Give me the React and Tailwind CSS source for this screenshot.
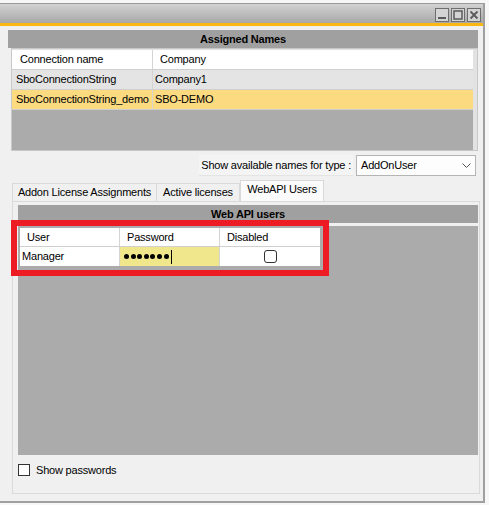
import React from 'react';

const font = { fontFamily: "'Liberation Sans', Arial, sans-serif" };

function TitleButton({ kind }) {
  return (
    <div className="w-[14px] h-[14px] border border-[#6e6e6e] bg-[#d4d4d4] flex items-center justify-center">
      <svg width="10" height="10" viewBox="0 0 10 10">
        {kind === 'min' && <rect x="1" y="7" width="8" height="2" fill="#5a5a5a" />}
        {kind === 'max' && <rect x="1" y="1" width="8" height="8" fill="none" stroke="#5a5a5a" strokeWidth="1.5" />}
        {kind === 'close' && (
          <path d="M1.5 1.5 L8.5 8.5 M8.5 1.5 L1.5 8.5" stroke="#5a5a5a" strokeWidth="1.8" />
        )}
      </svg>
    </div>
  );
}

export default function App() {
  const names = [
    { conn: 'SboConnectionString', company: 'Company1', bg: 'bg-[#e4e4e4]' },
    { conn: 'SboConnectionString_demo', company: 'SBO-DEMO', bg: 'bg-[#fbda80]' },
  ];

  return (
    <div className="relative w-[489px] h-[505px] bg-[#f7f7f7] pt-[3px] text-[11px] text-black tracking-[-0.2px]" style={font}>
      <div className="w-[485px] h-[500px] border-t border-[#9a9a9a] border-r-2 border-b-2 border-r-[#a0a0a0] border-b-[#a0a0a0] bg-[#f0f0f0] flex flex-col">
        {/* title bar */}
        <div className="h-[19px] bg-gradient-to-b from-[#d2d2d2] to-[#a8a8a8] flex items-center justify-end gap-[2px] pr-[2px] pt-[2px]">
          <TitleButton kind="min" />
          <TitleButton kind="max" />
          <TitleButton kind="close" />
        </div>
        <div className="h-[3px] bg-[#fbb714]" />

        {/* Assigned names */}
        <div className="mt-[4px] ml-[8px] w-[470px] h-[18px] bg-[#a0a0a0] flex items-center justify-center font-bold">
          Assigned Names
        </div>
        <div className="ml-[11px] w-[467px] h-[103px] border border-[#c8c8c8] bg-[#e2e2e2] pr-[4px] pt-[1px]">
          <div className="h-full bg-[#ababab] flex flex-col">
            <div className="h-[20px] bg-white flex border-b border-[#cfcfcf]">
              <div className="w-[141px] border-r border-[#d4d4d4] pl-[8px] flex items-center">Connection name</div>
              <div className="flex-1 pl-[7px] flex items-center">Company</div>
            </div>
            {names.map(n => (
              <div key={n.conn} className={`h-[20px] flex border-b border-[#cfcfcf] ${n.bg}`}>
                <div className="w-[141px] border-r border-[#d4d4d4] pl-[4px] flex items-center">{n.conn}</div>
                <div className="flex-1 pl-[2px] flex items-center">{n.company}</div>
              </div>
            ))}
          </div>
        </div>

        {/* type selector */}
        <div className="mt-[4px] h-[21px] flex justify-end items-center pr-[7px]">
          <div className="h-[21px] px-[2px] flex items-center bg-[#f4f4f4] border-b border-[#e4e4e4] mr-[3px]">
            Show available names for type :
          </div>
          <div className="w-[120px] h-[21px] border border-[#b4b4b4] bg-[#fdfdfd] flex items-center justify-between pl-[4px] pr-[4px]">
            <span>AddOnUser</span>
            <svg width="9" height="6" viewBox="0 0 9 6">
              <path d="M0.5 0.5 L4.5 4.5 L8.5 0.5" fill="none" stroke="#555" strokeWidth="1" />
            </svg>
          </div>
        </div>

        {/* tabs */}
        <div className="mt-[4px] ml-[12px] h-[21px] flex items-end">
          <div className="w-[145px] h-[18px] border border-b-0 border-[#d9d9d9] bg-[#f0f0f0] flex items-center justify-center">
            Addon License Assignments
          </div>
          <div className="w-[83px] h-[18px] border border-l-0 border-b-0 border-[#d9d9d9] bg-[#f0f0f0] flex items-center justify-center">
            Active licenses
          </div>
          <div className="w-[84px] h-[21px] border border-b-0 border-[#d9d9d9] bg-[#fbfbfb] flex items-center justify-center pb-[3px]">
            WebAPI Users
          </div>
        </div>
        <div className="ml-[12px] w-[468px] h-[293px] border border-[#dadada] bg-[#f0f0f0] pl-[5px] pt-[3px] flex flex-col">
          <div className="w-[460px] h-[18px] bg-[#a0a0a0] flex items-center justify-center font-bold">
            Web API users
          </div>
          <div className="mt-[3px] w-[460px] h-[229px] bg-[#ababab] pt-[2px] pl-[2px]">
            <div className="w-[300px] flex flex-col bg-white">
              <div className="h-[19px] flex border-b border-[#cfcfcf]">
                <div className="w-[100px] border-r border-[#d4d4d4] pl-[7px] flex items-center">User</div>
                <div className="w-[100px] border-r border-[#d4d4d4] pl-[7px] flex items-center">Password</div>
                <div className="w-[100px] pl-[7px] flex items-center">Disabled</div>
              </div>
              <div className="h-[19px] flex">
                <div className="w-[100px] border-r border-[#d4d4d4] pl-[2px] flex items-center">Manager</div>
                <div className="w-[100px] border-r border-[#d4d4d4] bg-[#f0e68c] pl-[4px] flex items-center gap-[1.6px]">
                  {Array.from({ length: 7 }).map((_, i) => (
                    <span key={i} className="w-[5px] h-[5px] rounded-full bg-black" />
                  ))}
                  <span className="ml-[1px] w-px h-[14px] bg-black" />
                </div>
                <div className="w-[100px] flex items-center justify-center">
                  <div className="w-[13px] h-[13px] border border-[#333] rounded-[3px] bg-white" />
                </div>
              </div>
            </div>
          </div>
          <div className="mt-[7px] flex items-center">
            <div className="w-[12px] h-[12px] border border-[#333] bg-white" />
            <span className="ml-[6px]">Show passwords</span>
          </div>
        </div>
      </div>

      {/* annotation frame */}
      <div className="absolute left-[11px] top-[220px] w-[318px] h-[56px] border-[6px] border-[#ed1c24]" />
    </div>
  );
}
